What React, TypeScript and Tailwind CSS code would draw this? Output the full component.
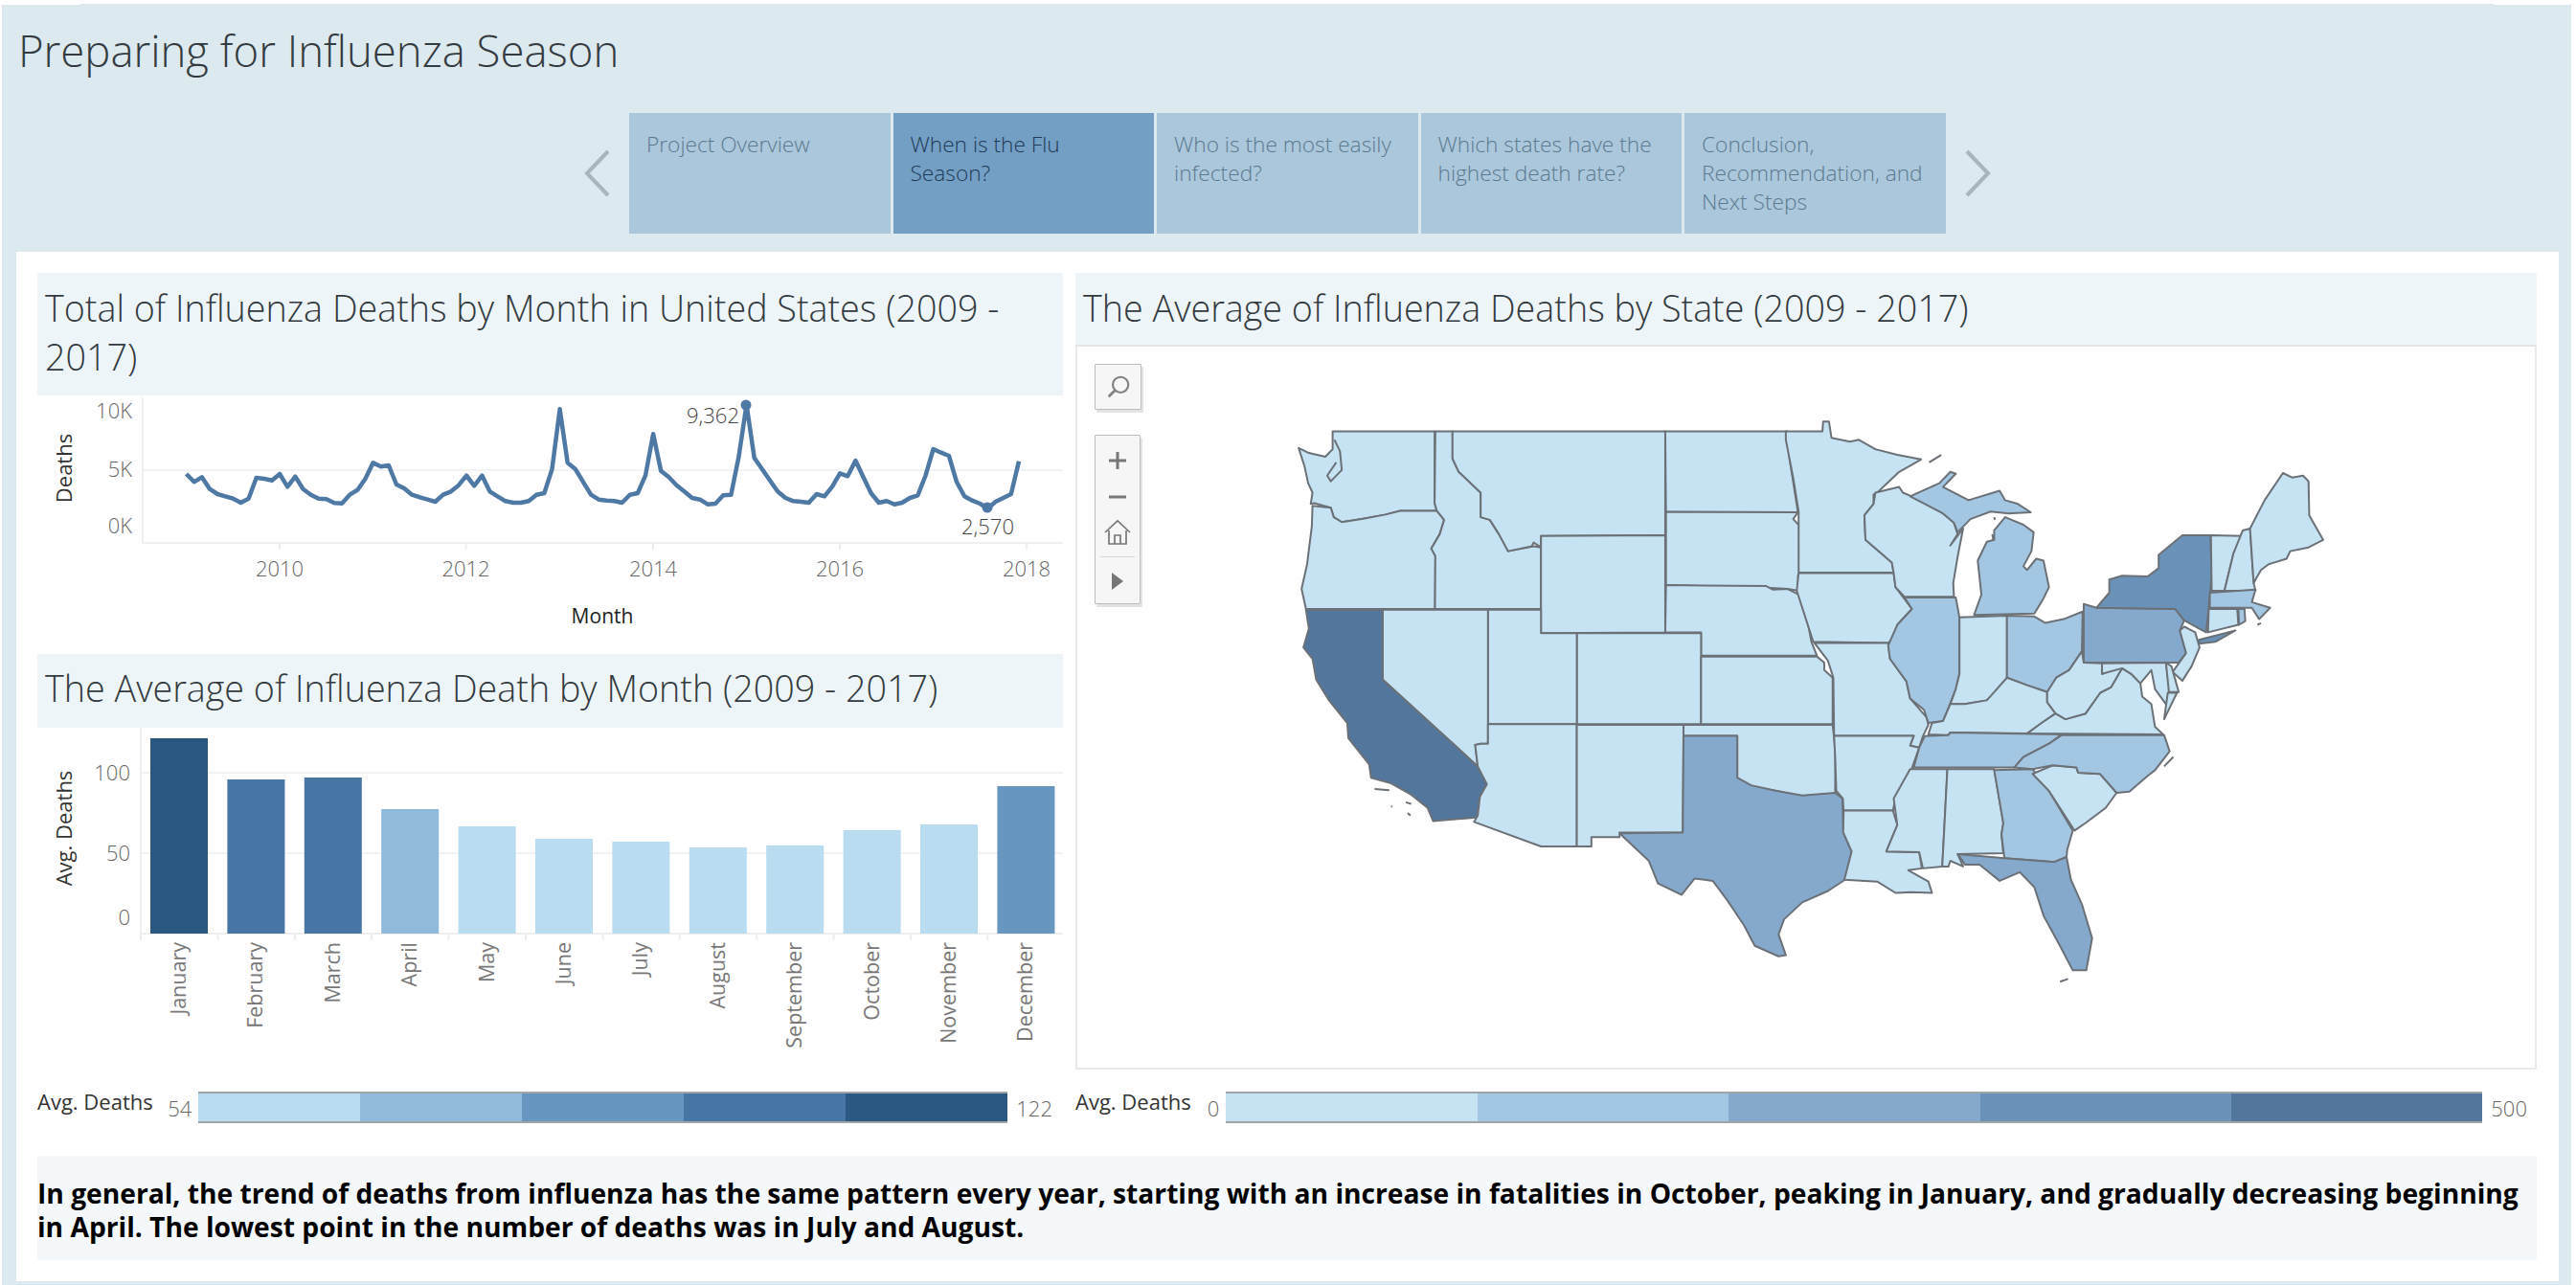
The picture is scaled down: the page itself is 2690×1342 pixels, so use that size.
const lineZ = [
  285, 310, 295, 332, 348, 355, 362, 375, 362, 297, 300, 305,
  285, 325, 293, 332, 350, 362, 364, 376, 377, 350, 335, 300,
  250, 262, 258, 318, 330, 350, 358, 365, 372, 350, 340, 320,
  290, 322, 290, 340, 355, 370, 375, 375, 370, 350, 345, 270,
  82, 250, 270, 310, 350, 365, 368, 370, 375, 350, 345, 290,
  160, 275, 295, 320, 340, 360, 365, 380, 378, 352, 350, 230,
  68, 235, 270, 305, 340, 360, 370, 372, 375, 348, 355, 325,
  283, 292, 243, 295, 345, 375, 370, 380, 375, 360, 352, 290,
  207, 218, 228, 310, 355, 368, 378, 393, 372, 360, 348, 245,
];
const linePoints = lineZ.map((z, i) => `${(194.6 + i * 8.125).toFixed(1)},${(400 + z / 3).toFixed(1)}`).join(" ");

const bars = [
  { name: "January", top: 771, color: "#2b5883" },
  { name: "February", top: 814, color: "#4776a5" },
  { name: "March", top: 812, color: "#4776a5" },
  { name: "April", top: 845, color: "#8fbadb" },
  { name: "May", top: 863, color: "#b9dcf0" },
  { name: "June", top: 876, color: "#b9dcf0" },
  { name: "July", top: 879, color: "#b9dcf0" },
  { name: "August", top: 885, color: "#b9dcf0" },
  { name: "September", top: 883, color: "#b9dcf0" },
  { name: "October", top: 867, color: "#b9dcf0" },
  { name: "November", top: 861, color: "#b9dcf0" },
  { name: "December", top: 821, color: "#6797c1" },
];

const tabs = [
  "Project Overview",
  "When is the Flu Season?",
  "Who is the most easily infected?",
  "Which states have the highest death rate?",
  "Conclusion, Recommendation, and Next Steps",
];

const L1 = "#c6e3f4";
const L2 = "#a3c7e2";
const L3 = "#84a9cd";
const L4 = "#6a91b7";
const L5 = "#53769c";

const westStates: [string, string][] = [
  ["M185,78 L464,78 L464,268 L470,288 L370,288 L330,298 L265,310 L210,318 L188,305 L180,280 L135,268 L125,270 L130,240 L118,215 L108,170 L92,122 L120,135 L165,145 L185,125 Z", L1],
  ["M130,275 L180,280 L188,305 L210,318 L265,310 L330,298 L370,288 L470,288 L490,312 L478,350 L455,388 L466,408 L465,548 L112,548 L100,495 L115,430 L128,330 Z", L1],
  ["M466,78 L513,78 L513,150 L530,185 L590,240 L590,305 L615,312 L640,350 L665,395 L735,382 L755,385 L755,548 L465,548 L466,408 L455,388 L478,350 L490,312 L470,288 L464,268 Z", L1],
  ["M513,78 L1095,78 L1095,353 L755,355 L755,385 L735,372 L730,382 L665,395 L640,350 L615,312 L590,305 L590,240 L530,185 L513,150 Z", L1],
  ["M755,355 L1095,353 L1095,610 L755,612 Z", L1],
  ["M1095,78 L1428,78 L1435,150 L1448,230 L1458,292 L1097,291 Z", L1],
  ["M1097,291 L1458,292 L1445,310 L1465,330 L1465,450 L1458,460 L1460,500 L1430,495 L1370,492 L1097,485 Z", L1],
  ["M1097,485 L1370,487 L1390,497 L1430,495 L1460,510 L1480,560 L1495,635 L1510,672 L1193,672 L1193,610 L1095,610 Z", L1],
  ["M853,612 L1193,612 L1193,853 L853,853 Z", L1],
  ["M1193,674 L1510,674 L1530,690 L1530,710 L1553,730 L1553,853 L1193,853 Z", L1],
  ["M610,550 L755,550 L755,612 L853,612 L853,853 L610,853 Z", L1],
  ["M322,550 L610,550 L610,905 L590,905 L575,908 L582,965 L322,735 Z", L1],
  ["M112,550 L322,550 L322,735 L582,965 L607,1012 L588,1045 L580,1100 L460,1110 L445,1075 L400,1040 L345,1010 L290,995 L285,960 L228,890 L225,850 L175,790 L140,735 L130,680 L105,650 L120,600 Z", L5],
  ["M610,853 L853,853 L853,1177 L755,1177 L572,1112 L582,1095 L588,1045 L607,1012 L582,965 L575,908 L590,905 L610,905 Z", L1],
  ["M853,855 L1145,855 L1143,1140 L970,1140 L970,1152 L893,1152 L893,1177 L853,1177 Z", L1],
  ["M1145,855 L1553,855 L1560,920 L1560,1045 L1500,1040 L1470,1045 L1400,1030 L1330,1020 L1292,995 L1292,884 L1145,884 Z", L1],
  ["M1145,884 L1292,884 L1292,995 L1330,1015 L1400,1030 L1470,1042 L1560,1035 L1580,1050 L1582,1140 L1605,1190 L1592,1262 L1540,1295 L1470,1325 L1420,1370 L1405,1410 L1425,1465 L1405,1468 L1340,1440 L1310,1385 L1265,1320 L1225,1268 L1175,1262 L1140,1305 L1075,1275 L1050,1215 L970,1142 L1143,1140 Z", L3],
];

const eastStates: [string, string][] = [
  ["M40,78 L140,78 L142,52 L158,52 L165,95 L215,105 L240,100 L285,125 L345,140 L410,152 L350,185 L290,240 L280,245 L280,270 L255,300 L258,365 L330,425 L335,452 L75,452 L75,290 L60,200 L40,100 Z", L1],
  ["M75,453 L335,453 L340,490 L385,548 L345,590 L340,620 L320,638 L115,635 L95,575 L70,500 L72,480 Z", L1],
  ["M118,638 L320,638 L325,680 L370,740 L380,785 L425,835 L430,855 L415,885 L405,915 L380,910 L390,884 L172,884 L170,730 L155,685 Z", L1],
  ["M285,240 L350,225 L360,240 L385,250 L470,295 L500,320 L510,350 L490,380 L525,335 L510,410 L498,480 L500,516 L365,516 L340,490 L335,452 L330,425 L258,365 L255,300 L280,270 Z", L1],
  ["M365,518 L505,518 L515,570 L515,720 L505,760 L487,805 L470,845 L430,850 L418,815 L380,785 L370,740 L325,680 L320,645 L345,590 L385,548 Z", L2],
  ["M380,250 L460,215 L490,185 L505,190 L470,225 L540,260 L625,235 L640,260 L675,270 L710,292 L650,295 L600,290 L545,310 L510,345 L500,320 L470,295 Z", L2],
  ["M640,305 L690,325 L718,345 L712,395 L690,435 L700,445 L725,415 L745,420 L760,490 L745,520 L720,560 L555,564 L575,510 L565,420 L590,370 L610,365 L610,340 Z", L2],
  ["M515,570 L645,566 L645,745 L590,790 L530,800 L490,800 L505,760 L515,720 Z", L1],
  ["M645,566 L720,568 L750,585 L800,575 L852,555 L850,660 L815,710 L780,730 L755,768 L700,750 L645,730 Z", L2],
  ["M430,880 L440,850 L470,845 L490,800 L530,800 L590,790 L645,730 L700,750 L755,768 L755,795 L778,825 L740,850 L700,878 L490,875 L485,882 Z", L1],
  ["M172,884 L390,884 L380,910 L405,915 L385,970 L340,1050 L333,1082 L198,1082 L196,1050 L178,1030 L175,940 Z", L1],
  ["M198,1082 L333,1082 L345,1120 L315,1190 L405,1192 L412,1235 L375,1240 L430,1270 L440,1300 L385,1298 L340,1300 L290,1270 L200,1265 L220,1190 L197,1140 Z", L1],
  ["M380,972 L482,972 L468,1230 L415,1235 L405,1192 L315,1190 L345,1120 L335,1050 Z", L1],
  ["M482,972 L610,972 L635,1115 L630,1145 L635,1195 L510,1197 L525,1230 L490,1215 L485,1230 L468,1230 Z", L1],
  ["M610,975 L715,972 L760,1030 L825,1135 L810,1185 L808,1205 L775,1218 L638,1208 L630,1145 L635,1115 Z", L2],
  ["M510,1197 L638,1208 L775,1218 L808,1205 L820,1265 L850,1330 L878,1420 L862,1505 L825,1505 L790,1440 L745,1360 L720,1285 L680,1245 L625,1268 L570,1225 L530,1225 Z", L3],
  ["M715,985 L770,962 L835,968 L840,982 L900,985 L945,1035 L915,1075 L860,1115 L830,1135 L760,1030 Z", L1],
  ["M700,878 L740,850 L778,825 L805,840 L860,825 L900,770 L930,755 L960,705 L985,720 L1010,745 L1015,780 L1040,800 L1050,860 L1072,880 Z", L1],
  ["M420,885 L485,882 L490,875 L795,880 L760,905 L690,940 L665,968 L390,968 L405,915 Z", L2],
  ["M795,882 L1075,882 L1090,925 L1050,975 L1030,990 L980,1032 L945,1035 L900,985 L840,982 L835,968 L770,962 L715,972 L665,968 L690,940 L760,905 Z", L2],
  ["M755,768 L780,730 L815,710 L850,660 L855,690 L905,692 L905,720 L950,700 L960,705 L930,755 L900,770 L860,825 L805,840 L778,825 L755,795 Z", L1],
  ["M855,535 L890,545 L1105,548 L1130,578 L1118,605 L1135,665 L1115,690 L855,690 Z", L3],
  ["M890,545 L925,505 L925,470 L960,460 L1030,462 L1060,440 L1060,405 L1125,353 L1202,353 L1205,460 L1197,545 L1190,610 L1170,600 L1130,578 L1105,548 Z", L4],
  ["M1170,630 L1270,605 L1215,635 L1170,640 Z", L4],
  ["M1130,595 L1160,610 L1172,650 L1150,700 L1125,738 L1098,715 L1135,665 L1118,605 Z", L1],
  ["M1203,353 L1290,355 L1265,400 L1240,500 L1205,500 Z", L1],
  ["M1290,340 L1310,335 L1320,480 L1325,500 L1240,500 L1265,400 Z", L1],
  ["M1320,480 L1310,335 L1350,260 L1400,188 L1425,200 L1455,195 L1470,210 L1472,300 L1510,365 L1470,385 L1420,395 L1410,415 L1360,430 L1340,445 L1325,470 Z", L1],
  ["M1200,505 L1325,497 L1315,530 L1365,545 L1335,575 L1315,545 L1200,545 Z", L2],
  ["M1197,548 L1275,548 L1278,590 L1195,610 Z", L1],
  ["M1278,548 L1295,548 L1297,580 L1280,590 Z", L2],
  ["M905,692 L1080,690 L1090,765 L1110,770 L1080,800 L1050,760 L1040,710 L1010,745 L985,720 L960,705 L905,720 Z", L1],
  ["M1080,690 L1095,700 L1115,768 L1088,768 Z", L1],
  ["M1085,770 L1110,770 L1075,840 Z", L1],
];

const westMarks = [
  "M190,100 L205,130 L210,180 L180,210 L170,195 L195,160",
  "M300,1025 L340,1028",
  "M345,1070 L348,1072",
  "M390,1088 L398,1095",
  "M385,1060 L400,1064",
];
const eastMarks = ["M432,160 L465,140", "M1075,965 L1100,940", "M790,1535 L812,1528", "M1330,590 L1340,586", "M610,305 L612,312", "M605,350 L608,368"];

function Title({ children, className }: { children: React.ReactNode; className: string }) {
  return <div className={`bg-[#eef5f9] text-[37.7px] leading-[51px] font-light text-[#333a40] ${className}`}>{children}</div>;
}

function Legend({ min, max, colors, className }: { min: string; max: string; colors: string[]; className: string }) {
  return (
    <div className={`flex h-[33px] items-start ${className}`}>
      <span className="mt-[-4px] text-[22px] leading-[28px] text-[#333]">Avg. Deaths</span>
      <span className="ml-auto mt-[3px] text-[22px] font-light leading-[28px] text-[#666]">{min}</span>
      <div className="ml-[7px] flex h-[33px] border-y-2 border-[#a0a5a8]">
        {colors.map((c) => (
          <div key={c} className="h-full flex-1" style={{ backgroundColor: c }} />
        ))}
      </div>
      <span className="ml-[9px] mt-[3px] text-[22px] font-light leading-[28px] text-[#666]">{max}</span>
    </div>
  );
}

function LineChart() {
  const ticks = [
    ["2010", 292],
    ["2012", 486.5],
    ["2014", 682],
    ["2016", 877],
    ["2018", 1072],
  ] as const;
  return (
    <svg viewBox="39 413 1071 270" className="h-[270px] w-[1071px]">
      <line x1="149" y1="415" x2="149" y2="567" stroke="#f0f0f0" strokeWidth="2" />
      <line x1="149" y1="567" x2="1110" y2="567" stroke="#f0f0f0" strokeWidth="2" />
      <line x1="149" y1="491" x2="1110" y2="491" stroke="#f1f2f3" strokeWidth="2" />
      {ticks.map(([label, x]) => (
        <g key={label}>
          <line x1={x} y1="567" x2={x} y2="574" stroke="#eeeeee" strokeWidth="2" />
          <text x={x} y="602" textAnchor="middle" fontSize="22" fontWeight="300" fill="#666">{label}</text>
        </g>
      ))}
      <text x="138" y="437" textAnchor="end" fontSize="22" fontWeight="300" fill="#666">10K</text>
      <text x="138" y="498" textAnchor="end" fontSize="22" fontWeight="300" fill="#666">5K</text>
      <text x="138" y="557" textAnchor="end" fontSize="22" fontWeight="300" fill="#666">0K</text>
      <text transform="translate(75,489) rotate(-90)" textAnchor="middle" fontSize="22" fill="#333">Deaths</text>
      <text x="629" y="651" textAnchor="middle" fontSize="21" fill="#222">Month</text>
      <polyline points={linePoints} fill="none" stroke="#4f79a5" strokeWidth="4.5" strokeLinejoin="round" />
      <circle cx="779" cy="423" r="5.5" fill="#4f79a5" />
      <circle cx="1031" cy="530" r="5.5" fill="#4f79a5" />
      <text x="772" y="442" textAnchor="end" fontSize="22" fontWeight="300" fill="#444">9,362</text>
      <text x="1059" y="558" textAnchor="end" fontSize="22" fontWeight="300" fill="#444">2,570</text>
    </svg>
  );
}

function BarChart() {
  return (
    <svg viewBox="39 760 1071 380" className="h-[380px] w-[1071px]">
      <line x1="147" y1="760" x2="147" y2="975" stroke="#f0f0f0" strokeWidth="2" />
      <line x1="147" y1="807" x2="1110" y2="807" stroke="#f1f2f3" strokeWidth="2" />
      <line x1="147" y1="891" x2="1110" y2="891" stroke="#f1f2f3" strokeWidth="2" />
      <line x1="147" y1="975" x2="1110" y2="975" stroke="#eeeeee" strokeWidth="2" />
      <text x="136" y="815" textAnchor="end" fontSize="22" fontWeight="300" fill="#666">100</text>
      <text x="136" y="899" textAnchor="end" fontSize="22" fontWeight="300" fill="#666">50</text>
      <text x="136" y="966" textAnchor="end" fontSize="22" fontWeight="300" fill="#666">0</text>
      <text transform="translate(75,865) rotate(-90)" textAnchor="middle" fontSize="22" fill="#333">Avg. Deaths</text>
      {bars.map((b, i) => {
        const x = 157 + i * 80.4;
        return (
          <g key={b.name}>
            <rect x={x} y={b.top} width="60" height={975 - b.top} fill={b.color} />
            <line x1={x - 10} y1="975" x2={x - 10} y2="982" stroke="#eeeeee" strokeWidth="2" />
            <text transform={`translate(${x + 37},984) rotate(-90)`} textAnchor="end" fontSize="21.5" fill="#777">{b.name}</text>
          </g>
        );
      })}
    </svg>
  );
}

function UsMap() {
  return (
    <svg viewBox="1124 362 1525 755" className="h-full w-full">
      <g transform="translate(1320,420) scale(0.3827,0.3954)" stroke="#6b7177" strokeWidth="2" strokeLinejoin="round">
        {westStates.map(([d, fill], i) => (
          <path key={i} d={d} fill={fill} vectorEffect="non-scaling-stroke" />
        ))}
        {westMarks.map((d) => (
          <path key={d} d={d} fill="none" vectorEffect="non-scaling-stroke" />
        ))}
      </g>
      <g transform="translate(1850,420) scale(0.3827,0.3954)" stroke="#6b7177" strokeWidth="2" strokeLinejoin="round">
        {eastStates.map(([d, fill], i) => (
          <path key={i} d={d} fill={fill} vectorEffect="non-scaling-stroke" />
        ))}
        {eastMarks.map((d) => (
          <path key={d} d={d} fill="none" vectorEffect="non-scaling-stroke" />
        ))}
      </g>
    </svg>
  );
}

function MapControls() {
  return (
    <div className="absolute left-[18px] top-[18px] flex flex-col gap-[26px]">
      <div className="flex h-[48px] w-[49px] items-center justify-center rounded-[1px] border border-[#bdbdbd] bg-[#f6f6f6] shadow-[2px_3px_0_#e4e4e4]">
        <svg viewBox="0 0 24 24" className="h-[26px] w-[26px]" fill="none" stroke="#808080" strokeWidth="2">
          <circle cx="14" cy="10" r="7.5" />
          <path d="M8.5 15.5 L2.5 21.5" strokeWidth="2.5" />
        </svg>
      </div>
      <div className="flex h-[177px] w-[48px] flex-col items-center rounded-[1px] border border-[#bdbdbd] bg-[#f6f6f6] shadow-[2px_3px_0_#e4e4e4]">
        <svg viewBox="0 0 20 20" className="mt-[16px] h-[20px] w-[20px]" stroke="#777" strokeWidth="3">
          <path d="M10 1 V19 M1 10 H19" />
        </svg>
        <svg viewBox="0 0 20 20" className="mt-[18px] h-[20px] w-[20px]" stroke="#777" strokeWidth="3">
          <path d="M1 10 H19" />
        </svg>
        <svg viewBox="0 0 28 28" className="mt-[13px] h-[28px] w-[28px]" fill="none" stroke="#777" strokeWidth="1.7">
          <path d="M1 14 L14 2 L27 14 M5 12 V26 H23 V12 M11 26 V17 H17 V26" />
        </svg>
        <div className="mt-[11px] h-[1px] w-[36px] bg-[#d8d8d8]" />
        <svg viewBox="0 0 14 20" className="mt-[15px] h-[20px] w-[14px]" fill="#777">
          <path d="M1 1 L13 10 L1 19 Z" />
        </svg>
      </div>
    </div>
  );
}

export default function App() {
  return (
    <div className="h-[1342px] w-[2690px] overflow-hidden bg-white font-['Open_Sans',sans-serif]">
      <div className="ml-[84px] h-[5px] w-[2520px] border-b border-[#dfe5e8]" />
      <div className="ml-[2px] mr-[5px] flex h-[1337px] flex-col bg-[#dce9ef]">
        <div className="px-[17px] pt-[24px]">
          <h1 className="text-[45.5px] font-light leading-[46px] text-[#333a40]">Preparing for Influenza Season</h1>
        </div>
        <div className="ml-[608px] mt-[43px] flex items-center">
          <svg viewBox="0 0 28 50" className="mr-[19px] h-[50px] w-[28px]" fill="none" stroke="#a9b4bb" strokeWidth="4">
            <path d="M25 2 L3 25 L25 48" />
          </svg>
          <div className="flex gap-[3px]">
            {tabs.map((t, i) => (
              <div
                key={t}
                className={`h-[126px] w-[272.5px] pl-[18px] pr-[12px] pt-[18px] text-[22.7px] font-light leading-[30px] ${
                  i === 1 ? "bg-[#739fc5] text-[#1e3a55]" : "bg-[#abc7db] text-[#5b7a90]"
                }`}
              >
                {t}
              </div>
            ))}
          </div>
          <svg viewBox="0 0 28 50" className="ml-[19px] h-[50px] w-[28px]" fill="none" stroke="#a9b4bb" strokeWidth="4">
            <path d="M3 2 L25 25 L3 48" />
          </svg>
        </div>
        <main className="ml-[15px] mr-[13px] mt-[19px] flex h-[1075px] flex-col bg-white pl-[22px] pr-[23px] pt-[22px]">
          <div className="flex gap-[13px]">
            <div className="flex w-[1071px] flex-col">
              <Title className="h-[128px] px-[8px] pt-[11px]">Total of Influenza Deaths by Month in United States (2009 - 2017)</Title>
              <LineChart />
              <Title className="h-[77px] px-[8px] pt-[10px]">The Average of Influenza Death by Month (2009 - 2017)</Title>
              <BarChart />
              <Legend
                min="54"
                max="122"
                colors={["#b9dcf0", "#8fbadb", "#6797c1", "#4776a5", "#2b5883"]}
                className="[&>div]:w-[845px] pr-[11px]"
              />
            </div>
            <div className="flex w-[1526px] flex-col">
              <Title className="h-[77px] border-b-2 border-[#e2e6e8] px-[8px] pt-[11px]">The Average of Influenza Deaths by State (2009 - 2017)</Title>
              <div className="relative h-[755px] border-x-2 border-b-2 border-[#e8eaeb]">
                <UsMap />
                <MapControls />
              </div>
              <Legend
                min="0"
                max="500"
                colors={[L1, L2, L3, L4, L5]}
                className="mt-[23px] [&>div]:w-[1312px] pr-[10px]"
              />
            </div>
          </div>
          <div className="mt-[34px] h-[109px] w-[2610px] bg-[#f4f8fa] pr-[10px] pt-[22px] text-[28.2px] font-bold leading-[35px] text-black">
            In general, the trend of deaths from influenza has the same pattern every year, starting with an increase in fatalities in October, peaking in January, and gradually decreasing beginning in April. The lowest point in the number of deaths was in July and August.
          </div>
        </main>
      </div>
    </div>
  );
}
